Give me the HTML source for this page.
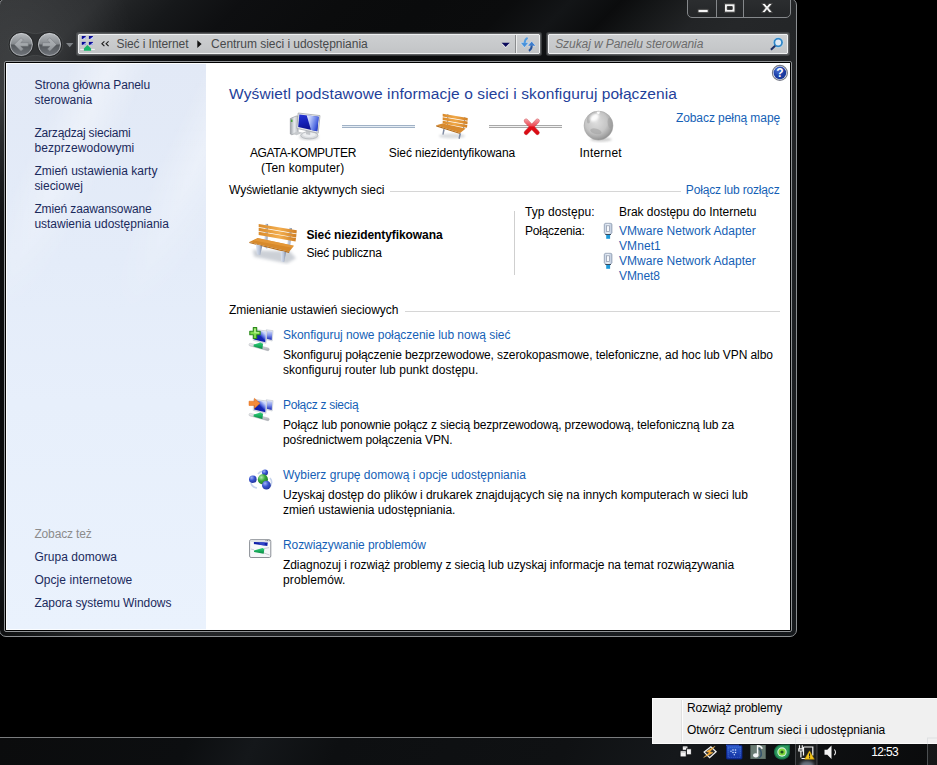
<!DOCTYPE html>
<html lang="pl">
<head>
<meta charset="utf-8">
<title>Centrum sieci i udostępniania</title>
<style>
html,body{margin:0;padding:0;background:#000;}
body{width:937px;height:765px;position:relative;overflow:hidden;font-family:"Liberation Sans",sans-serif;font-size:12px;}
.abs{position:absolute;}
.t{position:absolute;white-space:pre;line-height:16px;font-family:"Liberation Sans",sans-serif;}
svg{position:absolute;overflow:visible;}
/* window frame */
#win{position:absolute;left:-1px;top:-2px;width:796px;height:637px;border:1px solid #8b8e91;border-radius:7px;
 background:linear-gradient(135deg,#2e3032 0%,#2b2d2f 7%,#202224 9.5%,#16181a 12.5%,#0e0f11 17%,#0b0c0d 24%,#0a0b0c 30%,#0b0c0d 36%,#131517 40%,#0b0c0d 43.5%,#161819 46.5%,#222426 50%,#252729 53%,#242628 57%,#222426 62%,#1c1f22 78%,#15181b 100%);}
#winhl{position:absolute;left:0;top:0;width:220px;height:260px;background:radial-gradient(ellipse 120px 150px at 18px 66px,rgba(255,255,255,.085) 0%,rgba(255,255,255,.06) 35%,rgba(255,255,255,0) 100%);}
#clientborder{position:absolute;left:4px;top:61px;width:786px;height:569px;border:1px solid #909396;border-radius:2px;background:#000;}
#client{position:absolute;left:6px;top:63px;width:784px;height:567px;background:#fff;overflow:hidden;}
#side{position:absolute;left:0;top:0;width:200px;height:567px;
 background:linear-gradient(180deg,#e2e9f6 0%,#e4ecf9 35%,#e7effb 60%,#eaf2fd 100%);box-shadow:inset 1px 1px 0 #fbfdff, inset 0 -1px 0 #fbfdff;}
#side .streak{position:absolute;left:0;top:0;width:200px;height:260px;
 background:linear-gradient(115deg,rgba(255,255,255,0) 20%,rgba(255,255,255,.35) 33%,rgba(255,255,255,0) 46%,rgba(255,255,255,0) 62%,rgba(255,255,255,.3) 74%,rgba(255,255,255,0) 88%);
 -webkit-mask-image:linear-gradient(180deg,#000 0%,#000 40%,transparent 100%);mask-image:linear-gradient(180deg,#000 0%,#000 40%,transparent 100%);}
/* caption buttons */
#caps{position:absolute;left:687px;top:-3px;width:104px;height:21px;border:1px solid #85888b;border-radius:0 0 5px 5px;background:linear-gradient(180deg,#2c2e30,#242628);box-sizing:border-box;}
#caps i{position:absolute;top:0;width:1px;height:20px;background:#85888b;}
/* address bar */
.bar{position:absolute;top:34px;height:20px;box-sizing:border-box;border:1px solid #eff0f1;border-radius:1px;
 background:linear-gradient(180deg,#cdcfd1 0%,#c8cacc 50%,#c2c4c6 100%);box-shadow:0 0 0 1px #5d5f61,0 0 0 2px rgba(120,123,126,.38);}
.hr{position:absolute;height:1px;background:#d6d6d6;}
/* taskbar */
#taskbar{position:absolute;left:0;top:737px;width:937px;height:28px;border-top:1px solid #7a7c7e;
 background:linear-gradient(115deg,#0b0c0d 0%,#0c0e10 20%,#14171a 27%,#0d0f11 36%,#0f1113 60%,#15181b 72%,#0f1113 82%,#0a0b0c 100%);box-sizing:border-box;}
#menu{position:absolute;left:652px;top:698px;width:290px;height:46px;box-sizing:border-box;border:1px solid #fbfbfb;background:#f0f0f0;}
#menu .gut{position:absolute;left:28px;top:1px;width:1px;height:42px;background:#e0e0e0;border-right:1px solid #fdfdfd;}
</style>
</head>
<body>
<div id="win"></div><div id="winhl"></div>
<div id="caps"><i style="left:28px"></i><i style="left:55px"></i>
<svg style="left:0;top:0" width="104" height="21" viewBox="0 0 104 21">
 <!-- minimize -->
 <rect x="10" y="11.300" width="10.200" height="3.400" fill="#f4f4f4" stroke="#3a3a3a" stroke-width="1"/>
 <!-- maximize -->
 <path d="M36.500 5.800h10.500v8.400h-10.500z M39.300 8.600v2.800h4.900v-2.800z" fill="#f4f4f4" fill-rule="evenodd" stroke="#3a3a3a" stroke-width="1"/>
 <!-- close -->
 <path d="M73.5 5.5h3.4l2.1 2.6 2.1-2.6h3.4l-3.8 4.4 3.8 4.6h-3.4l-2.1-2.8-2.1 2.8h-3.4l3.8-4.6z" fill="#f4f4f4" stroke="#3a3a3a" stroke-width="0.8"/>
</svg>

</div>
<svg style="left:0;top:26px" width="80" height="36" viewBox="0 26 80 36">
 <defs>
  <linearGradient id="nb" x1="0" y1="0" x2="0" y2="1">
   <stop offset="0" stop-color="#b4b8bc"/><stop offset=".49" stop-color="#85898d"/><stop offset=".51" stop-color="#53575b"/><stop offset="1" stop-color="#70747a"/>
  </linearGradient>
  <linearGradient id="nr" x1="0" y1="0" x2="0" y2="1">
   <stop offset="0" stop-color="#c6c9cc"/><stop offset="1" stop-color="#9a9da1"/>
  </linearGradient>
  <linearGradient id="na" x1="0" y1="0" x2="0" y2="1">
   <stop offset="0" stop-color="#aeb2b6"/><stop offset=".5" stop-color="#a4a8ac"/><stop offset="1" stop-color="#8c9094"/>
  </linearGradient>
 </defs>
 <!-- pill -->
 <path d="M21.300 31.200a13.300 13.300 0 0 0 0 26.600c6 0 9-2.400 14.100-2.400s8.100 2.400 14.100 2.400a13.300 13.300 0 0 0 0-26.600c-6 0-9 2.400-14.100 2.400s-8.100-2.400-14.100-2.400z" fill="#303234" stroke="#4a4c4e" stroke-width=".8" opacity=".9"/>
 <circle cx="21.300" cy="44.500" r="11.100" fill="url(#nb)" stroke="url(#nr)" stroke-width="1.100"/>
 <circle cx="49.500" cy="44.500" r="11.100" fill="url(#nb)" stroke="url(#nr)" stroke-width="1.100"/>
 <circle cx="21.300" cy="44.500" r="12.100" fill="none" stroke="#1c1d1e" stroke-width=".9" opacity=".8"/>
 <circle cx="49.500" cy="44.500" r="12.100" fill="none" stroke="#1c1d1e" stroke-width=".9" opacity=".8"/>
 <!-- arrows -->
 <path d="M14.300 44.500l6.700-6.800 2.400 2.400-2.700 2.600h7.600v3.600h-7.600l2.700 2.600-2.400 2.400z" fill="url(#na)" stroke="#6e7276" stroke-width=".4"/>
 <path d="M56.500 44.500l-6.700-6.800-2.400 2.400 2.700 2.600h-7.600v3.600h7.600l-2.700 2.600 2.400 2.400z" fill="url(#na)" stroke="#6e7276" stroke-width=".4"/>
 <path d="M66 43h7.400l-3.700 4.200z" fill="#7d8185"/>
</svg>

<div class="bar" style="left:78px;width:462px;"><div class="abs" style="left:436px;top:0;width:1px;height:18px;background:#8a8c8e;box-shadow:1px 0 0 #eceded;"></div></div>
<div class="bar" style="left:548px;width:240px;"></div>
<svg style="left:76px;top:32px" width="714" height="24" viewBox="76 32 714 24">
 <!-- control panel network icon -->
 <g>
  <rect x="81.800" y="36" width="4" height="2.900" fill="#0a0a96"/><path d="M85.800 36.600v2.300h-3z" fill="#c4d2ff"/>
  <rect x="88.900" y="36" width="4.100" height="2.900" fill="#0a0a96"/><path d="M93 36.600v2.300h-3z" fill="#c4d2ff"/>
  <rect x="81.800" y="41.900" width="4" height="2.900" fill="#0a0a96"/><path d="M85.800 42.500v2.300h-3z" fill="#c4d2ff"/>
  <rect x="88.900" y="41.900" width="4.100" height="2.900" fill="#0a0a96"/><path d="M93 42.500v2.300h-3z" fill="#c4d2ff"/>
  <rect x="80.200" y="48.900" width="14.600" height="1.100" fill="#eef0f2"/>
  <path d="M87.400 45.100l3.700 3.300v2.300h-7.200v-2.300z" fill="#19b56a"/>
 </g>
 <!-- chevrons -->
 <path d="M104.400 41.300l-2.500 2.400 2.500 2.400M108.600 41.300l-2.500 2.400 2.500 2.400" fill="none" stroke="#202020" stroke-width="1.150"/>
 <path d="M197.300 40.200l4.300 3.900-4.300 3.900z" fill="#111"/>
 <!-- dropdown -->
 <path d="M501.600 43.700h8.200l-4.100 4.300z" fill="#fff" opacity=".8"/>
 <path d="M501.600 42.700h8.200l-4.100 4.300z" fill="#0c0c5c"/>
 <!-- refresh -->
 <path d="M520.400 42.600h8.300l-4.200 4.900z" fill="#4590da" stroke="#e6f0fb" stroke-width=".5"/>
 <path d="M524.600 43c.2-2.600 1.200-4.400 3-5.200" fill="none" stroke="#4f9be2" stroke-width="2"/>
 <path d="M527.600 46h8.200l-4.100-4.700z" fill="#3b7bcb" stroke="#e6f0fb" stroke-width=".5"/>
 <path d="M531.700 45.600c0 2.600-.9 4.300-2.800 5.200" fill="none" stroke="#27549c" stroke-width="2"/>
 <!-- magnifier -->
 <circle cx="778.200" cy="42.500" r="3.900" fill="#dfe9f5" stroke="#2f86c8" stroke-width="1.900"/>
 <circle cx="778.200" cy="42.500" r="5.100" fill="none" stroke="#b9dcf3" stroke-width=".7" opacity=".8"/>
 <path d="M775.200 45.800l-4.300 3.900" stroke="#1e2f66" stroke-width="2" stroke-linecap="butt"/>
</svg>

<div id="clientborder"></div>
<div id="client">
 <div id="side"><div class="streak"></div></div>
</div>
<!-- separators -->
<div class="hr" style="left:390px;top:191px;width:291px;"></div>
<div class="hr" style="left:405px;top:311px;width:375px;"></div>
<div class="abs" style="left:514px;top:211px;width:1px;height:64px;background:#cfcfcf;"></div>
<svg style="left:280px;top:105px" width="350" height="45" viewBox="280 105 350 45">
 <defs>
  <linearGradient id="scr" x1="0" y1="0" x2="0.25" y2="1">
   <stop offset="0" stop-color="#2636d6"/><stop offset=".55" stop-color="#1420b4"/><stop offset="1" stop-color="#0a0f8a"/>
  </linearGradient>
  <linearGradient id="scrh" x1="0" y1="0" x2="1" y2="0.45">
   <stop offset="0" stop-color="#eef2ff"/><stop offset=".35" stop-color="#b4c3f8"/><stop offset=".8" stop-color="#5a74e4"/><stop offset="1" stop-color="#2f48d0"/>
  </linearGradient>
  <linearGradient id="twr" x1="0" y1="0" x2="1" y2="0"><stop offset="0" stop-color="#9a9fa5"/><stop offset=".5" stop-color="#e9ebee"/><stop offset="1" stop-color="#b8bcc1"/></linearGradient>
  <radialGradient id="glb" cx=".42" cy=".38" r=".62"><stop offset="0" stop-color="#dedede"/><stop offset=".6" stop-color="#c6c6c6"/><stop offset=".9" stop-color="#a2a2a2"/><stop offset="1" stop-color="#929292"/></radialGradient>
  <linearGradient id="wood" x1="0" y1="0" x2="1" y2="0"><stop offset="0" stop-color="#d98a2b"/><stop offset=".5" stop-color="#f0a848"/><stop offset="1" stop-color="#d07e22"/></linearGradient>
  <linearGradient id="redx" gradientUnits="userSpaceOnUse" x1="0" y1="119" x2="0" y2="135"><stop offset="0" stop-color="#f4a0a6"/><stop offset=".42" stop-color="#ec4a54"/><stop offset=".5" stop-color="#e20e18"/><stop offset="1" stop-color="#d60a12"/></linearGradient>
  <filter id="blur1"><feGaussianBlur stdDeviation="1.2"/></filter>
 </defs>
 <!-- computer -->
 <g>
  <ellipse cx="309" cy="137" rx="10" ry="3.200" fill="#b9bcc0" opacity=".55" filter="url(#blur1)"/>
  <path d="M290.300 118.500l6-2.500 1.800 0 0 16.500-6.300 2.300-1.500-.8z" fill="url(#twr)" stroke="#8e9297" stroke-width=".6"/>
  <rect x="290.900" y="119.600" width="1.600" height="2.400" fill="#4aa33a"/>
  <path d="M292 133.600l6-2 5 1.200-6.500 2.400z" fill="#c7cacd"/>
  <ellipse cx="309.300" cy="135.300" rx="8.600" ry="3.600" fill="#d9dbde" stroke="#a9adb1" stroke-width=".7"/>
  <ellipse cx="309.300" cy="134.600" rx="6.400" ry="2.300" fill="#eceef0"/>
  <path d="M305.500 129.500l5 1.200-.4 4.400-4-.8z" fill="#c2c5c9"/>
  <path d="M298.200 113l21.800 2.600-1.800 17.600-21.400-4.800z" fill="#e6e8ec" stroke="#a4a8ad" stroke-width=".8"/>
  <path d="M299.300 114.400l19.400 2.300-1.500 14.600-19-4.200z" fill="url(#scr)"/>
  <path d="M306.700 115.300l12 1.400-1.500 14.600-6.200-1.400z" fill="url(#scrh)"/>
 </g>
 <!-- line 1 -->
 <rect x="342" y="125" width="73" height="1" fill="#a0b1c5"/><rect x="342" y="126" width="73" height="1" fill="#e4ecf4"/><rect x="342" y="127" width="73" height="1" fill="#a0b1c5"/>
 <!-- small bench -->
 <g>
  <ellipse cx="452" cy="136" rx="13" ry="2.600" fill="#9aa0a8" opacity=".35" filter="url(#blur1)"/>
  <path d="M447.300 114l1 0-.1 11-1.200 0z M464.300 117l1.100.2-1.300 11.500-1.200-.2z" fill="#8d97a8"/>
  <path d="M442.700 113.700l25 4.300-.1 2.700-24.900-4.200z" fill="url(#wood)"/>
  <path d="M442.700 117.300l24.900 4.200-.2 2.700-24.700-4.200z" fill="url(#wood)"/>
  <path d="M442.700 120.800l24.600 4.200-.3 2.800-24.300-4.300z" fill="url(#wood)"/>
  <path d="M436.200 125.300l6.500-1.900 23 5.200-5.500 4.400z" fill="#d88a2e"/>
  <path d="M436.200 125.300l24 7.700-.1 1.100-23.900-7.600z" fill="#b46c18"/>
  <path d="M443.200 129l1.600.4-1.200 5.400-1.300-.4z M459.500 133.200l1.600.4-1.300 5.300-1.400-.3z" fill="#7f8ba3"/>
 </g>
 <!-- line 2 with red X -->
 <rect x="489" y="125" width="73" height="1" fill="#a8a8a8"/><rect x="489" y="126" width="73" height="1" fill="#f2f2f2"/><rect x="489" y="127" width="73" height="1" fill="#a8a8a8"/>
 <g stroke-linecap="round" fill="none">
  <path d="M526.100 121l11.300 11.700M537.400 121l-11.300 11.700" stroke="#b80a10" stroke-width="4.600" opacity=".55"/>
  <path d="M526.100 121l11.300 11.700M537.400 121l-11.300 11.700" stroke="url(#redx)" stroke-width="3.800"/>
 </g>
 <!-- globe -->
 <ellipse cx="601" cy="139.500" rx="11" ry="2.200" fill="#999" opacity=".45" filter="url(#blur1)"/>
 <circle cx="598.500" cy="125.600" r="14.500" fill="url(#glb)" stroke="#a4a4a4" stroke-width=".5"/>
 <g fill="#9c9c9c" opacity=".5">
  <ellipse cx="595.900" cy="131.300" rx="5.800" ry="2.700" transform="rotate(14 595.9 131.3)"/>
  <ellipse cx="610" cy="123.200" rx="2.300" ry="5.400" transform="rotate(-8 610 123.2)"/>
  <path d="M587.500 117c1.500-2.600 4-4.600 7.200-5.400l1.800 1.600c-2.600 1.400-4.400 3.600-5.600 6.400-.6 1.800-1 3.800-2.600 4-1.600-.6-1.800-4-0.800-6.600z"/>
 </g>
 <ellipse cx="594.300" cy="117.800" rx="5" ry="3.600" fill="#fff" opacity=".95" transform="rotate(-35 594 117.500)" filter="url(#blur1)"/>
 <path d="M596.800 111.800l3.200-.4-.6 2.400-1.800.4z" fill="#fff" opacity=".9"/>
</svg>

<svg style="left:240px;top:215px" width="70" height="55" viewBox="0 0 937 736">
 <defs>
  <linearGradient id="wd2" x1="0" y1="0" x2="1" y2="0"><stop offset="0" stop-color="#d98b2c"/><stop offset=".55" stop-color="#f3ae4f"/><stop offset="1" stop-color="#cf7f25"/></linearGradient>
  <linearGradient id="leg" x1="0" y1="0" x2="1" y2="0"><stop offset="0" stop-color="#dfe6f2"/><stop offset=".55" stop-color="#b9c4d8"/><stop offset="1" stop-color="#76839c"/></linearGradient>
  <filter id="blur2"><feGaussianBlur stdDeviation="22"/></filter>
 </defs>
 <path d="M170 470l500 20 80 90-120 70-440-90z" fill="#8f98a6" opacity=".45" filter="url(#blur2)"/>
 <!-- back posts -->
 <path d="M340 118l36 4-12 330-44-20z" fill="url(#leg)"/>
 <path d="M660 172l36 6-34 340-42-14z" fill="url(#leg)"/>
 <!-- slats -->
 <path d="M250 120l510 84-4 44-506-88z" fill="url(#wd2)"/>
 <path d="M250 172l506 84-5 44-501-86z" fill="url(#wd2)"/>
 <path d="M250 224l500 84-6 48-494-90z" fill="url(#wd2)"/>
 <!-- seat -->
 <path d="M125 362l112-54 484 102-62 82z" fill="#d78a2c"/>
 <path d="M180 340l60-28 478 100-20 26z" fill="#e79b3c" opacity=".8"/>
 <path d="M125 362l534 130-4 16-530-132z" fill="#b66d19"/>
 <!-- front legs -->
 <path d="M212 392l86 22-28 124-44-14z" fill="url(#leg)"/>
 <path d="M545 478l72 18-26 136-42-12z" fill="url(#leg)"/>
</svg>

<svg style="left:603px;top:222px" width="11" height="48" viewBox="603 222 11 48">
 <defs><linearGradient id="plg" x1="0" y1="0" x2="1" y2="0"><stop offset="0" stop-color="#c4d2e4"/><stop offset=".5" stop-color="#eef3f9"/><stop offset="1" stop-color="#b2c2d8"/></linearGradient>
 <g id="plug">
  <path d="M604.300 224.600c0-.9.700-1.300 1.500-1.300h4.600c.9 0 1.500.5 1.500 1.300v8.200l-1.500 1.700h-4.600l-1.500-1.700z" fill="url(#plg)" stroke="#8a98ac" stroke-width=".8"/>
  <rect x="606.600" y="225.800" width="3" height="5.600" fill="#f7f9fc" stroke="#8a93a6" stroke-width=".7"/>
  <rect x="606.200" y="234.500" width="3.900" height="4.300" fill="#1f9ad9"/>
  <rect x="605.300" y="234" width="5.700" height="1" fill="#3c4a5c"/>
 </g></defs>
 <use href="#plug"/><use href="#plug" y="30"/>
</svg>

<svg style="left:245px;top:322px" width="32" height="242" viewBox="245 322 32 242">
 <defs>
  <linearGradient id="ms" x1="0" y1="1" x2="1" y2="0"><stop offset="0" stop-color="#0a14a0"/><stop offset=".5" stop-color="#1626b4"/><stop offset=".62" stop-color="#5a70e0"/><stop offset=".8" stop-color="#c4d0fa"/><stop offset="1" stop-color="#e8eeff"/></linearGradient>
  <linearGradient id="ms2" x1="0" y1="0" x2="0" y2="1"><stop offset="0" stop-color="#d6def8"/><stop offset=".5" stop-color="#7f92ea"/><stop offset="1" stop-color="#1424b0"/></linearGradient>
  <linearGradient id="pipe" x1="0" y1="0" x2="0" y2="1"><stop offset="0" stop-color="#f0f1f3"/><stop offset="1" stop-color="#a6aab0"/></linearGradient>
  <linearGradient id="grn" x1="0" y1="0" x2="0" y2="1"><stop offset="0" stop-color="#2fd37c"/><stop offset="1" stop-color="#0a8a43"/></linearGradient>
  <radialGradient id="bsp" cx=".35" cy=".3" r=".8"><stop offset="0" stop-color="#9fb2f4"/><stop offset=".45" stop-color="#3a56d0"/><stop offset="1" stop-color="#1b2c94"/></radialGradient>
  <radialGradient id="gsp" cx=".35" cy=".3" r=".8"><stop offset="0" stop-color="#b6ecb0"/><stop offset=".45" stop-color="#38a83a"/><stop offset="1" stop-color="#1b6f22"/></radialGradient>
  <g id="twomon">
   <!-- rear monitor -->
   <path d="M266.300 329.700l6.800 1-.9 10.300-6.400-1.500z" fill="#e4e7ee" stroke="#b4bac6" stroke-width=".5"/>
   <path d="M267 330.700l5.400.8-.7 8.500-5-1.200z" fill="url(#ms2)"/>
   <!-- front monitor -->
   <path d="M253.800 329.400l13.200 1.600-1 12.300-12.800-3z" fill="#e6e9f0" stroke="#aeb4c0" stroke-width=".5"/>
   <path d="M254.600 330.400l11.600 1.400-.9 10.400-11.200-2.600z" fill="url(#ms)"/>
   <path d="M259.600 342l3.600.9-.2 2.300-3.400-.8z" fill="#c4c8cf"/>
   <!-- pipe -->
   <path d="M249.900 345.900c-1.500-.4-1-2.900.6-2.500l17.800 4.600c1.600.4 1.100 3.100-.6 2.700z" fill="url(#pipe)" stroke="#a2a6ac" stroke-width=".4"/>
   <path d="M253.800 344.500l6.600-1.900 2.600 1.300-.6 5-8.900-2.300z" fill="url(#grn)"/>
  </g>
 </defs>
 <!-- 1: setup new connection -->
 <use href="#twomon"/>
 <path d="M253.300 327.600h3.400v3.700h3.400v3.500h-3.400v3.700h-3.400v-3.700h-3.500v-3.500h3.500z" fill="#7ddc4a" stroke="#2c8a1c" stroke-width="1.100" stroke-linejoin="round"/>
 <path d="M254.200 328.600h1.500v3.700h3.500v1h-3.500v0h-1.500z" fill="#c9f5a6" opacity=".8"/>
 <!-- 2: connect to a network -->
 <g transform="translate(0 70)">
  <use href="#twomon"/>
  <path d="M249 331.200h5.400v-2.900l5.600 5-5.600 5.200v-3h-5.400z" fill="#f58b3a" stroke="#e06a14" stroke-width=".5"/>
 </g>
 <!-- 3: homegroup -->
 <g>
  <path d="M258 474c2-3 7-4 10-1.500M270 478c2.500 3 2 7-1 9.500M257 488c-3-.5-5.500-2.500-6-5" fill="none" stroke="#b8c8e8" stroke-width="1.600" opacity=".8"/>
  <circle cx="265" cy="472.600" r="3" fill="url(#bsp)"/>
  <circle cx="252.800" cy="479.200" r="3.800" fill="url(#bsp)"/>
  <circle cx="262.900" cy="479.400" r="5.100" fill="url(#gsp)"/>
  <circle cx="266.400" cy="485.200" r="4.400" fill="url(#bsp)"/>
 </g>
 <!-- 4: troubleshoot -->
 <g>
  <rect x="249.600" y="539.700" width="21.200" height="17.800" rx="1.500" fill="#f6f7f9" stroke="#8b8f96" stroke-width="1"/>
  <rect x="250.300" y="540.400" width="19.800" height="1.600" fill="#dfe2e6"/>
  <path d="M253.900 541.900l13.900.500-.500 3.700-13.400-2z" fill="#1020a8"/>
  <path d="M259.500 542.100l5 .200.300 3.300-5.300-.800z" fill="#3a50d0" opacity=".8"/>
  <path d="M265.600 540.500h.8M267.200 540.500h.8M268.800 540.500h.8" stroke="#55595f" stroke-width=".8"/>
  <path d="M254 550.500l8.500-2.600 1.800 1-.6 4.800-9.700-1.800z" fill="url(#grn)"/>
  <path d="M251 549l3 .8M264 548.500l5-.8M264 553l5.500 2" stroke="#c9cdd2" stroke-width="1"/>
 </g>
</svg>

<svg style="left:770px;top:63px" width="20" height="20" viewBox="770 63 20 20">
 <defs><radialGradient id="hlp" cx=".35" cy=".3" r=".9"><stop offset="0" stop-color="#4a6fd0"/><stop offset=".5" stop-color="#1c3fa6"/><stop offset="1" stop-color="#15308a"/></radialGradient></defs>
 <circle cx="779.900" cy="72.900" r="7.500" fill="#e8ecf6" stroke="#767a86" stroke-width="1.100"/>
 <circle cx="779.900" cy="72.900" r="6.300" fill="url(#hlp)"/>
 <text x="779.900" y="77.300" text-anchor="middle" font-family="Liberation Sans, sans-serif" font-weight="bold" font-size="12" fill="#fff">?</text>
</svg>

<div id="taskbar"></div>
<div id="menu"><div class="gut"></div></div>
<svg style="left:670px;top:738px" width="267" height="27" viewBox="670 738 267 27">
 <defs>
  <linearGradient id="bb" x1="0" y1="0" x2="0" y2="1"><stop offset="0" stop-color="#2c5ccc"/><stop offset="1" stop-color="#1230a0"/></linearGradient>
  <radialGradient id="gg" cx=".5" cy=".5" r=".6"><stop offset="0" stop-color="#9be37a"/><stop offset=".6" stop-color="#3fae3a"/><stop offset="1" stop-color="#1d7a2a"/></radialGradient>
 <filter id="tglow" x="-50%" y="-50%" width="200%" height="200%"><feGaussianBlur stdDeviation="1.6"/></filter></defs>
 <!-- hover highlight around network icon -->
 <rect x="795.500" y="738" width="21.500" height="28" fill="rgba(255,255,255,.06)" stroke="rgba(200,205,210,.28)" stroke-width="1"/>
 <!-- 1: windows squares -->
 <g fill="#f3f3f3" stroke="#101214" stroke-width=".8">
  <rect x="682.300" y="746" width="5.600" height="4.200"/>
  <rect x="686.500" y="748.800" width="4.800" height="6"/>
  <rect x="680.100" y="750.800" width="6.100" height="6.100"/>
 </g>
 <rect x="683.300" y="747.100" width="3.600" height=".8" fill="#c9c9c9"/><rect x="681.100" y="752" width="4.100" height=".8" fill="#c9c9c9"/>
 <!-- 2: winamp bolt -->
 <path d="M704.200 752.100l6.700-5.300 5.200 4.900-6.500 6z" fill="#2b2b2b" stroke="#f0f0f0" stroke-width="1.300"/>
 <path d="M715 746.300l-8.600 5.300 3.200.9-6 5 9.400-4.700-3.200-1.100z" fill="#f5a32a" stroke="#ffcf6e" stroke-width=".4"/>
 <!-- 3: blue square -->
 <rect x="726.500" y="745.500" width="15.500" height="13.500" rx="1" fill="url(#bb)" stroke="#0c2484" stroke-width=".9"/>
 <rect x="728.300" y="747.300" width="12" height="10" fill="none" stroke="#6f95ea" stroke-width=".5" stroke-dasharray="1 1"/>
 <rect x="726" y="744.600" width="13" height="1.400" fill="#2a4cc0"/>
 <g fill="#cfe0ff"><circle cx="733" cy="750" r=".8"/><circle cx="735.500" cy="750" r=".8"/><circle cx="733" cy="752.500" r=".8"/><circle cx="735.500" cy="752.500" r=".8"/><circle cx="731" cy="751.300" r=".7"/><circle cx="734.300" cy="754.800" r=".7"/></g>
 <!-- 4: music note -->
 <rect x="750.300" y="745" width="15.500" height="14" fill="#5d6e66"/>
 <rect x="751" y="745.600" width="14" height="12.800" fill="#72847c" opacity=".6"/>
 <ellipse cx="755.800" cy="755.300" rx="2.700" ry="2.100" fill="#f4f6f8"/>
 <path d="M757.600 755v-9.200c2.400.2 4 1.200 4.600 3" fill="none" stroke="#f4f6f8" stroke-width="1.500"/>
 <path d="M758.500 748c2 0 4 3 3.500 7.500-.8 2-2.500 3-4.500 3 2-1 3-3 3-5s-.8-3.500-2-4z" fill="#2b4a6a" opacity=".8"/>
 <!-- 5: green -->
 <path d="M774 752c0-4.400 3.100-7.600 7.900-7.600h8v7.600c0 4.400-3.100 7.600-8 7.600s-7.900-3.200-7.900-7.600z" fill="#17744a"/>
 <path d="M775.200 752c0-3.700 2.600-6.300 6.700-6.300h6.700v6.300c0 3.700-2.600 6.400-6.700 6.400s-6.700-2.700-6.700-6.400z" fill="#2c9a5c"/>
 <circle cx="782" cy="752" r="4.700" fill="#d4f2dc"/>
 <circle cx="782" cy="752" r="3.600" fill="#7fd63a"/>
 <circle cx="782" cy="752" r="1.600" fill="#1c5222"/>
 <ellipse cx="807" cy="765" rx="7" ry="4" fill="#c8dcf4" opacity=".45" filter="url(#tglow)"/>
 <!-- 6: network + warning -->
 <g fill="none" stroke="#f2f2f2" stroke-width="1.200">
  <path d="M803.500 747h9.300v8.500M803.500 747v8.500M801.500 758.500h5"/>
  <path d="M799.500 745.200v3.400M802.300 745.200v3.400M798.800 748.800h4.200v2.200h-4.200zM800.900 751v6.500"/>
 </g>
 <path d="M809.500 750.800l4.800 8.400h-9.600z" fill="#f5c518" stroke="#b98a00" stroke-width=".5"/>
 <rect x="809" y="753.500" width="1.100" height="3" fill="#222"/><rect x="809" y="757.200" width="1.100" height="1.100" fill="#222"/>
 <!-- 7: speaker -->
 <path d="M824.500 749.800h2.800l4.200-4.300v13.500l-4.200-4.300h-2.800z" fill="#f4f4f4"/>
 <path d="M834.300 749.500c1.400 1.600 1.400 4 0 5.600" fill="none" stroke="#e4e4e4" stroke-width="1.100"/>
 <!-- show desktop -->
 <rect x="927.500" y="738" width="10" height="28" fill="rgba(255,255,255,.05)" stroke="rgba(190,195,200,.35)" stroke-width="1"/>
</svg>

<span class="t" style="left:116.5px;top:36px;font-size:12px;color:#47494b;letter-spacing:-0.098px;">Sieć i Internet</span>
<span class="t" style="left:211.1px;top:36px;font-size:12px;color:#47494b;letter-spacing:-0.028px;">Centrum sieci i udostępniania</span>
<span class="t" style="left:555.2px;top:36px;font-size:12px;color:#6b6b6b;letter-spacing:-0.077px;font-style:italic;">Szukaj w Panelu sterowania</span>
<span class="t" style="left:34.6px;top:77px;font-size:12px;color:#1b2a5c;letter-spacing:-0.101px;">Strona główna Panelu</span>
<span class="t" style="left:34.6px;top:92px;font-size:12px;color:#1b2a5c;letter-spacing:-0.063px;">sterowania</span>
<span class="t" style="left:34.4px;top:125px;font-size:12px;color:#1b2a5c;letter-spacing:-0.182px;">Zarządzaj sieciami</span>
<span class="t" style="left:34.4px;top:140px;font-size:12px;color:#1b2a5c;letter-spacing:0.079px;">bezprzewodowymi</span>
<span class="t" style="left:34.4px;top:163px;font-size:12px;color:#1b2a5c;letter-spacing:0.013px;">Zmień ustawienia karty</span>
<span class="t" style="left:34.4px;top:178px;font-size:12px;color:#1b2a5c;letter-spacing:-0.032px;">sieciowej</span>
<span class="t" style="left:34.4px;top:201px;font-size:12px;color:#1b2a5c;letter-spacing:-0.123px;">Zmień zaawansowane</span>
<span class="t" style="left:34.4px;top:216px;font-size:12px;color:#1b2a5c;letter-spacing:-0.011px;">ustawienia udostępniania</span>
<span class="t" style="left:34.4px;top:526px;font-size:12px;color:#8c8c8c;letter-spacing:-0.140px;">Zobacz też</span>
<span class="t" style="left:34.4px;top:549px;font-size:12px;color:#1b2a5c;letter-spacing:0.046px;">Grupa domowa</span>
<span class="t" style="left:34.4px;top:572px;font-size:12px;color:#1b2a5c;letter-spacing:0.074px;">Opcje internetowe</span>
<span class="t" style="left:34.4px;top:595px;font-size:12px;color:#1b2a5c;letter-spacing:-0.048px;">Zapora systemu Windows</span>
<span class="t" style="left:229.1px;top:86px;font-size:15.5px;color:#1f3f9a;letter-spacing:0.112px;">Wyświetl podstawowe informacje o sieci i skonfiguruj połączenia</span>
<span class="t" style="left:675.9px;top:110px;font-size:12px;color:#155fb6;letter-spacing:-0.071px;">Zobacz pełną mapę</span>
<span class="t" style="left:249.9px;top:145px;font-size:12px;color:#000;letter-spacing:-0.336px;">AGATA-KOMPUTER</span>
<span class="t" style="left:261.0px;top:160px;font-size:12px;color:#000;letter-spacing:0.193px;">(Ten komputer)</span>
<span class="t" style="left:388.8px;top:145px;font-size:12px;color:#000;letter-spacing:-0.077px;">Sieć niezidentyfikowana</span>
<span class="t" style="left:579.6px;top:145px;font-size:12px;color:#000;letter-spacing:0.187px;">Internet</span>
<span class="t" style="left:229.0px;top:182px;font-size:12px;color:#000;letter-spacing:-0.040px;">Wyświetlanie aktywnych sieci</span>
<span class="t" style="left:685.8px;top:182px;font-size:12px;color:#155fb6;letter-spacing:-0.168px;">Połącz lub rozłącz</span>
<span class="t" style="left:306.4px;top:227px;font-size:12px;color:#000;letter-spacing:-0.085px;font-weight:bold;">Sieć niezidentyfikowana</span>
<span class="t" style="left:306.4px;top:245px;font-size:12px;color:#000;letter-spacing:-0.142px;">Sieć publiczna</span>
<span class="t" style="left:525.0px;top:204px;font-size:12px;color:#000;letter-spacing:0.082px;">Typ dostępu:</span>
<span class="t" style="left:525.0px;top:223px;font-size:12px;color:#000;letter-spacing:-0.232px;">Połączenia:</span>
<span class="t" style="left:619.0px;top:204px;font-size:12px;color:#000;letter-spacing:-0.028px;">Brak dostępu do Internetu</span>
<span class="t" style="left:619.0px;top:223px;font-size:12px;color:#155fb6;letter-spacing:0.034px;">VMware Network Adapter</span>
<span class="t" style="left:619.0px;top:238px;font-size:12px;color:#155fb6;letter-spacing:0.073px;">VMnet1</span>
<span class="t" style="left:619.0px;top:253px;font-size:12px;color:#155fb6;letter-spacing:0.034px;">VMware Network Adapter</span>
<span class="t" style="left:619.0px;top:268px;font-size:12px;color:#155fb6;letter-spacing:-0.093px;">VMnet8</span>
<span class="t" style="left:229.0px;top:302px;font-size:12px;color:#000;letter-spacing:-0.048px;">Zmienianie ustawień sieciowych</span>
<span class="t" style="left:283.0px;top:327px;font-size:12px;color:#155fb6;letter-spacing:-0.034px;">Skonfiguruj nowe połączenie lub nową sieć</span>
<span class="t" style="left:283.0px;top:347px;font-size:12px;color:#000;letter-spacing:-0.090px;">Skonfiguruj połączenie bezprzewodowe, szerokopasmowe, telefoniczne, ad hoc lub VPN albo</span>
<span class="t" style="left:283.0px;top:362px;font-size:12px;color:#000;letter-spacing:0.034px;">skonfiguruj router lub punkt dostępu.</span>
<span class="t" style="left:283.0px;top:397px;font-size:12px;color:#155fb6;letter-spacing:-0.272px;">Połącz z siecią</span>
<span class="t" style="left:283.0px;top:417px;font-size:12px;color:#000;letter-spacing:-0.129px;">Połącz lub ponownie połącz z siecią bezprzewodową, przewodową, telefoniczną lub za</span>
<span class="t" style="left:283.0px;top:432px;font-size:12px;color:#000;letter-spacing:-0.109px;">pośrednictwem połączenia VPN.</span>
<span class="t" style="left:283.0px;top:467px;font-size:12px;color:#155fb6;letter-spacing:0.020px;">Wybierz grupę domową i opcje udostępniania</span>
<span class="t" style="left:283.0px;top:487px;font-size:12px;color:#000;letter-spacing:-0.040px;">Uzyskaj dostęp do plików i drukarek znajdujących się na innych komputerach w sieci lub</span>
<span class="t" style="left:283.0px;top:502px;font-size:12px;color:#000;letter-spacing:-0.034px;">zmień ustawienia udostępniania.</span>
<span class="t" style="left:283.0px;top:537px;font-size:12px;color:#155fb6;letter-spacing:-0.080px;">Rozwiązywanie problemów</span>
<span class="t" style="left:283.0px;top:557px;font-size:12px;color:#000;letter-spacing:-0.078px;">Zdiagnozuj i rozwiąż problemy z siecią lub uzyskaj informacje na temat rozwiązywania</span>
<span class="t" style="left:283.0px;top:572px;font-size:12px;color:#000;letter-spacing:0.112px;">problemów.</span>
<span class="t" style="left:686.9px;top:700px;font-size:12px;color:#000;letter-spacing:-0.172px;">Rozwiąż problemy</span>
<span class="t" style="left:686.9px;top:722px;font-size:12px;color:#000;letter-spacing:-0.010px;">Otwórz Centrum sieci i udostępniania</span>
<span class="t" style="left:871.2px;top:744px;font-size:12px;color:#fff;letter-spacing:-0.646px;">12:53</span>
</body>
</html>
